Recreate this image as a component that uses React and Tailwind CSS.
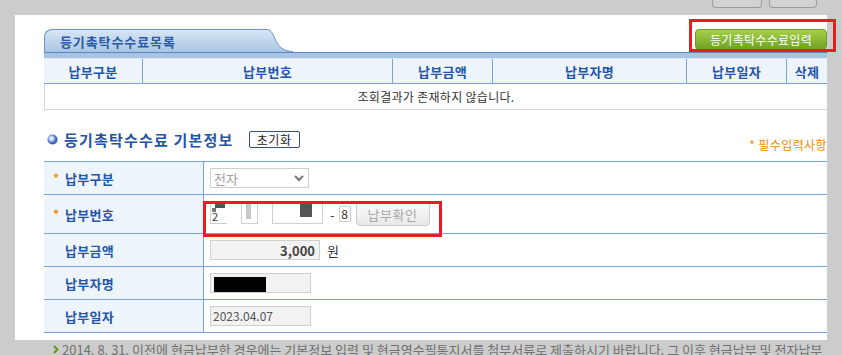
import React from 'react';

const listCols = ['납부구분', '납부번호', '납부금액', '납부자명', '납부일자', '삭제'];

const Label = ({ star, children }) => (
  <div className="w-[160px] shrink-0 bg-[#eef4fb] border-r border-[#7aa3dc] flex items-center pl-[9px]">
    <span className={`w-[12px] text-[#f08c00] text-[12px] font-bold ${star ? '' : 'invisible'}`}>*</span>
    <span className="text-[13px] font-bold text-[#2255aa] tracking-[0.3px]">{children}</span>
  </div>
);

const Row = ({ h, star, label, children }) => (
  <div className={`flex border-b border-[#7aa3dc] ${h}`}>
    <Label star={star}>{label}</Label>
    <div className="flex-1 flex items-center pl-[6px]">{children}</div>
  </div>
);

const App = () => {
  return (
    <div className="relative w-[842px] h-[355px] overflow-hidden bg-[#cccccc] font-['Noto_Sans_CJK_KR',sans-serif] leading-none">
      {/* buttons above the panel (cut off) */}
      <div className="h-[15px] flex justify-end gap-[7px] pr-[25px]">
        <div className="w-[50px] h-[8px] bg-[#d2d2d2] border border-t-0 border-[#9d9d9d] rounded-b-[4px]" />
        <div className="w-[48px] h-[8px] bg-[#d2d2d2] border border-t-0 border-[#9d9d9d] rounded-b-[4px]" />
      </div>

      <div className="ml-[15px] w-[812px] h-[325px] bg-white pl-[29px] pt-[14px]">
        {/* tab + register button */}
        <div className="flex items-end justify-between h-[23px]">
          <div className="flex items-end h-[23px]">
            <div className="w-[218px] h-[23px] rounded-tl-[8px] border-l border-t border-[#6f95c6] bg-gradient-to-b from-[#d9e6f4] to-[#a9c5e4] flex items-center pl-[15px]">
              <span className="text-[13px] font-bold text-[#2a5aa8] tracking-[0.9px]">등기촉탁수수료목록</span>
            </div>
            <svg width="31" height="23" viewBox="0 0 31 23" className="block">
              <defs>
                <linearGradient id="tabg" x1="0" y1="0" x2="0" y2="1">
                  <stop offset="0" stopColor="#d9e6f4" />
                  <stop offset="1" stopColor="#a9c5e4" />
                </linearGradient>
              </defs>
              <path d="M0 0.5 L4 0.5 C10 0.5 11 6 14 12 C17 18 22 22.5 31 22.5 L31 23 L0 23 Z" fill="url(#tabg)" />
              <path d="M0 0.5 L4 0.5 C10 0.5 11 6 14 12 C17 18 22 22.5 31 22.5" fill="none" stroke="#6f95c6" strokeWidth="1" />
            </svg>
          </div>
          <button className="mb-[2px] w-[132px] h-[21px] rounded-[4px] border border-[#6d9c22] bg-gradient-to-b from-[#a5d04a] to-[#6fa322] text-white text-[12px] tracking-[0.3px] flex items-center justify-center">
            등기촉탁수수료입력
          </button>
        </div>

        {/* list table */}
        <div className="h-[6px] border-t border-[#5d88c2] bg-[#a9c4e3]" />
        <div className="grid grid-cols-[99px_250px_100px_194px_100px_40px] h-[26px] bg-[#eef4fb] border-b border-[#7aa3dc] border-t border-t-[#dfe9f6]">
          {listCols.map((c, i) => (
            <div
              key={c}
              className={`flex items-center justify-center text-[13px] font-bold text-[#2255aa] tracking-[0.3px] ${i < 5 ? 'border-r border-[#7aa3dc]' : ''}`}
            >
              {c}
            </div>
          ))}
        </div>
        <div className="h-[26px] border-l border-b border-[#d6d6d6] flex items-center justify-center text-[12px] text-[#333] tracking-[0.3px]">
          조회결과가 존재하지 않습니다.
        </div>

        {/* section title */}
        <div className="mt-[20px] h-[19px] flex items-end justify-between">
          <div className="flex items-center h-[19px]">
            <svg width="11" height="11" viewBox="0 0 11 11" className="ml-[3px] mr-[6px]">
              <defs>
                <radialGradient id="bul" cx="0.4" cy="0.4" r="0.6">
                  <stop offset="0" stopColor="#ffffff" />
                  <stop offset="0.35" stopColor="#b9cdf0" />
                  <stop offset="0.7" stopColor="#4e76c6" />
                  <stop offset="1" stopColor="#2b4f9e" />
                </radialGradient>
              </defs>
              <circle cx="5.5" cy="5.5" r="5" fill="url(#bul)" />
            </svg>
            <span className="text-[15px] font-bold text-[#2453a6] tracking-[1.2px]">등기촉탁수수료 기본정보</span>
            <button className="ml-[15px] w-[51px] h-[17px] border border-[#33507e] rounded-[2px] bg-white text-[12px] text-[#222] tracking-[0.5px] flex items-center justify-center">
              초기화
            </button>
          </div>
          <span className="mb-[-2px] text-[12px] text-[#f08c00] whitespace-nowrap tracking-[0.4px]">* 필수입력사항</span>
        </div>

        {/* form */}
        <div className="mt-[12px] border-t border-[#7aa3dc]">
          <Row h="h-[33px]" star label="납부구분">
            <div className="w-[99px] h-[20px] border border-[#cfcfcf] flex items-center justify-between px-[3px]">
              <span className="text-[13px] text-[#a0a0a0]">전자</span>
              <svg width="12" height="8" viewBox="0 0 12 8">
                <path d="M2 2 L6 6 L10 2" fill="none" stroke="#777" strokeWidth="2" />
              </svg>
            </div>
          </Row>
          <Row h="h-[39px]" star label="납부번호">
            <div className="flex items-center">
              <div className="relative w-[17px] h-[20px] border-l border-b border-[#cfcfcf]">
                <div className="absolute left-[4px] top-0 w-[10px] h-[4px] bg-[#555]" />
                <div className="absolute left-[1px] top-[4px] w-[4px] h-[4px] bg-[#777]" />
                <span className="absolute left-[1px] top-[7px] text-[11px] text-[#333]">2</span>
              </div>
              <div className="relative ml-[14px] w-[17px] h-[20px] border-b border-l border-r border-[#cfcfcf] border-t-0">
                <div className="absolute left-[4px] top-0 w-[5px] h-[15px] bg-[#c8c8c8]" />
              </div>
              <div className="relative ml-[14px] w-[51px] h-[20px] border-b border-l border-r border-[#cfcfcf]">
                <div className="absolute left-[27px] top-0 w-[12px] h-[13px] bg-[#555]" />
              </div>
              <span className="ml-[7px] text-[13px] text-[#444]">-</span>
              <div className="ml-[4px] w-[12px] h-[16px] border border-[#cfcfcf] flex items-center justify-center text-[12px] text-[#333]">8</div>
              <button className="ml-[5px] w-[74px] h-[24px] rounded-[4px] border border-[#cccccc] bg-gradient-to-b from-[#fbfbfb] to-[#e8e8e8] text-[13px] text-[#a8a8a8] tracking-[0.5px] flex items-center justify-center">
                납부확인
              </button>
            </div>
          </Row>
          <Row h="h-[33px]" label="납부금액">
            <div className="w-[110px] h-[20px] border border-[#cfcfcf] bg-[#f2f2f2] flex items-center justify-end pr-[4px] text-[13px] font-bold text-[#444]">
              3,000
            </div>
            <span className="ml-[7px] text-[13px] text-[#333]">원</span>
          </Row>
          <Row h="h-[33px]" label="납부자명">
            <div className="relative w-[101px] h-[20px] border border-[#cfcfcf] bg-[#f2f2f2]">
              <div className="absolute left-[3px] top-[3px] w-[52px] h-[15px] bg-black" />
            </div>
          </Row>
          <Row h="h-[33px]" label="납부일자">
            <div className="w-[101px] h-[20px] border border-[#cfcfcf] bg-[#f2f2f2] flex items-center pl-[2px] text-[12px] text-[#555]">
              2023.04.07
            </div>
          </Row>
        </div>
      </div>

      {/* note below */}
      <div className="mt-[3px] pl-[53px] flex items-center whitespace-nowrap">
        <svg width="6" height="9" viewBox="0 0 6 9" className="mr-[3px]">
          <path d="M1 1 L4.5 4.5 L1 8" fill="none" stroke="#5a9a1a" strokeWidth="2" />
        </svg>
        <span className="text-[13px] leading-[13px] text-[#707070]">
          2014. 8. 31. 이전에 현금납부한 경우에는 기본정보 입력 및 현금영수필통지서를 첨부서류로 제출하시기 바랍니다. 그 이후 현금납부 및 전자납부
        </span>
      </div>

      {/* red highlight boxes */}
      <div className="absolute left-[689px] top-[19px] w-[147px] h-[33px] border-[3px] border-[#e81c24]" />
      <div className="absolute left-[203px] top-[201px] w-[239px] h-[36px] border-[3px] border-[#e81c24]" />
    </div>
  );
};

export default App;
